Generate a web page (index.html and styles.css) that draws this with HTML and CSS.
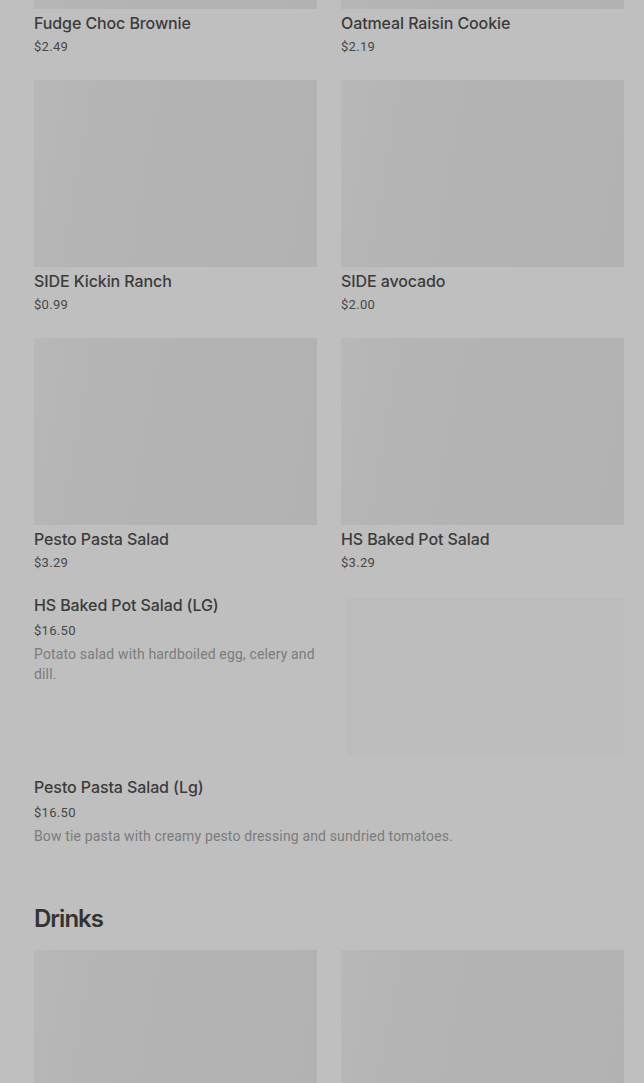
FILE: index.html
```html
<!DOCTYPE html>
<html>
<head>
<meta charset="utf-8">
<link rel="stylesheet" href="styles.css">
</head>
<body>
<main class="menu">
  <section class="section">
    <div class="grid">
      <div class="card"><div class="thumb"></div><div class="title">Fudge Choc Brownie</div><div class="price">$2.49</div></div>
      <div class="card"><div class="thumb"></div><div class="title">Oatmeal Raisin Cookie</div><div class="price">$2.19</div></div>
      <div class="card"><div class="thumb"></div><div class="title">SIDE Kickin Ranch</div><div class="price">$0.99</div></div>
      <div class="card"><div class="thumb"></div><div class="title">SIDE avocado</div><div class="price">$2.00</div></div>
      <div class="card"><div class="thumb"></div><div class="title">Pesto Pasta Salad</div><div class="price">$3.29</div></div>
      <div class="card"><div class="thumb"></div><div class="title">HS Baked Pot Salad</div><div class="price">$3.29</div></div>
    </div>
    <div class="wide">
      <div class="wide-text">
        <div class="title">HS Baked Pot Salad (LG)</div>
        <div class="price wide-price">$16.50</div>
        <div class="desc">Potato salad with hardboiled egg, celery and dill.</div>
      </div>
      <div class="wide-thumb"></div>
    </div>
    <div class="wide plain">
      <div class="wide-text">
        <div class="title">Pesto Pasta Salad (Lg)</div>
        <div class="price wide-price">$16.50</div>
        <div class="desc">Bow tie pasta with creamy pesto dressing and sundried tomatoes.</div>
      </div>
    </div>
  </section>
  <section class="section">
    <h2 class="heading">Drinks</h2>
    <div class="grid">
      <div class="card"><div class="thumb"></div></div>
      <div class="card"><div class="thumb"></div></div>
    </div>
  </section>
</main>
</body>
</html>
```

FILE: styles.css
```css
html, body {
  margin: 0;
  padding: 0;
  background: #bfbfbf;
  overflow: hidden;
}
body {
  font-family: Roboto, "Liberation Sans", sans-serif;
  color: #3a3a3a;
}
.menu {
  padding: 0 20px 0 34px;
  margin-top: -178px;
}
.grid {
  display: grid;
  grid-template-columns: 283px 283px;
  column-gap: 24px;
}
.card {
  margin-bottom: 23px;
}
.thumb {
  height: 187px;
  background: linear-gradient(100deg, #b8b8b8 0%, #b4b4b4 25%, #b2b2b2 100%);
}
.title {
  margin-top: 4px;
  font-family: Inter, Roboto, sans-serif;
  font-size: 16px;
  line-height: 20px;
  font-weight: 500;
  color: #3b3b3b;
  letter-spacing: -0.1px;
}
.price {
  margin-top: 4px;
  font-size: 13px;
  line-height: 20px;
  color: #474747;
  letter-spacing: 0.3px;
}
.wide {
  display: flex;
  justify-content: space-between;
  margin-bottom: 23px;
}
.wide-text {
  width: 283px;
}
.wide .title {
  margin-top: -1px;
}
.wide-price {
  margin-top: 6px;
}
.desc {
  margin-top: 3px;
  font-size: 14px;
  line-height: 20px;
  color: #7b7b7b;
  letter-spacing: 0.15px;
}
.wide-thumb {
  width: 277px;
  height: 157px;
  margin-top: 2px;
  background: #bcbcbc;
}
.plain {
  margin-bottom: 57px;
}
.plain .wide-text {
  width: auto;
}
.heading {
  margin: 0 0 15px;
  font-family: Inter, Roboto, sans-serif;
  font-size: 24px;
  line-height: 32px;
  font-weight: 600;
  color: #333;
  letter-spacing: -1px;
}
```
